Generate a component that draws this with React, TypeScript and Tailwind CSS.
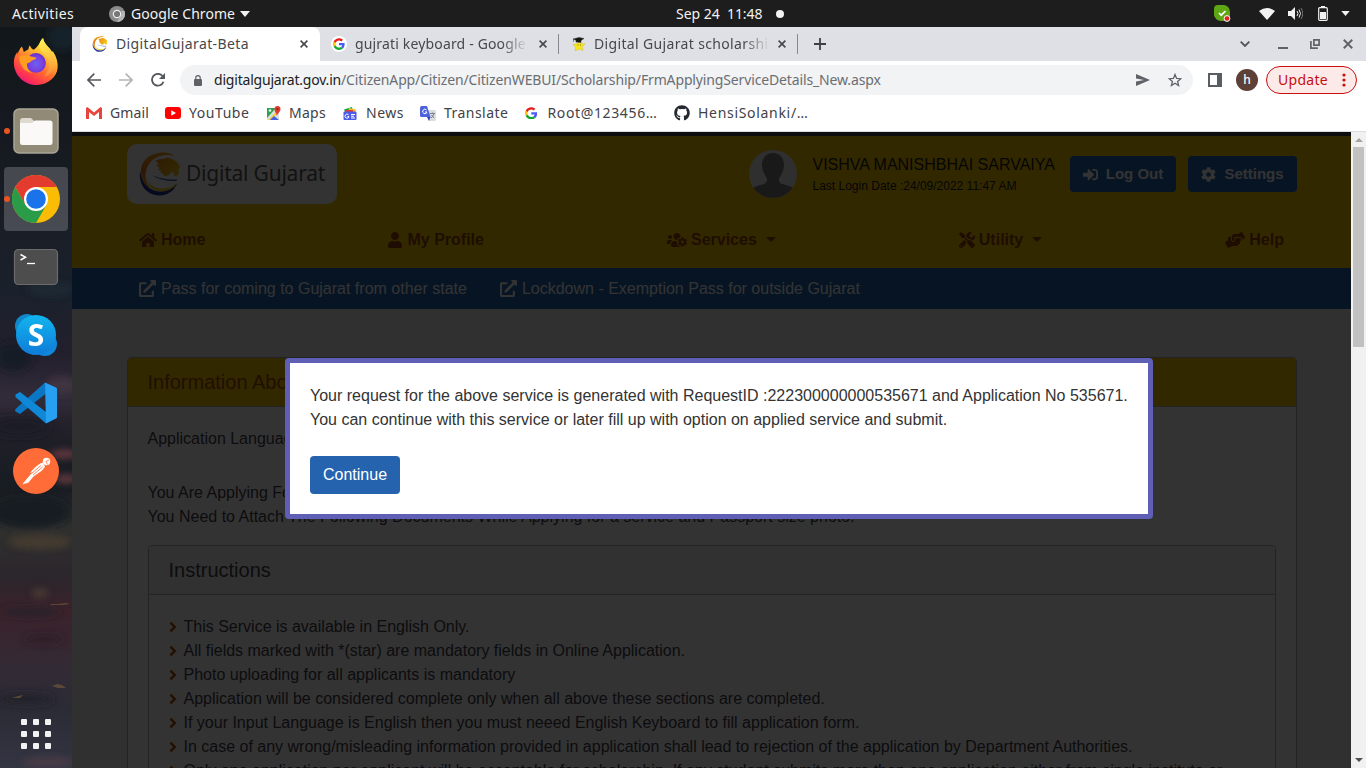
import type { ReactNode } from "react";
import {
  FaAngleRight,
  FaCog,
  FaExternalLinkAlt,
  FaGithub,
  FaHandsHelping,
  FaHome,
  FaSignInAlt,
  FaTools,
  FaUser,
  FaUsersCog,
} from "react-icons/fa";

const GoogleG = ({ className }: { className: string }) => (
  <svg viewBox="0 0 48 48" className={className}>
    <path fill="#FFC107" d="M10.5 28.6a13.600 13.600 0 0 1 0-9.200V13.200H2.600a23.500 23.500 0 0 0 0 21.600z" />
    <path fill="#EA1D1D" d="M24 10c3.600 0 6.700 1.200 9.200 3.600l6.900-6.900C35.900 2.800 30.500.5 24 .5 14.700.5 6.600 5.800 2.600 13.200l7.900 6.200C12.400 13.700 17.700 10 24 10z" />
    <path fill="#4A5CF5" d="M46.500 24.500c0-1.600-.2-3.100-.4-4.500H24v9h12.700c-.6 3-2.300 5.400-4.800 7.100l7.700 6c4.500-4.200 6.900-10.300 6.900-17.600z" />
    <path fill="#12A830" d="M24 47.500c6.500 0 11.900-2.100 15.600-5.400l-7.700-6c-2.100 1.400-4.800 2.300-7.900 2.300-6.300 0-11.600-4.200-13.500-9.800l-7.900 6.200C6.600 42.200 14.700 47.500 24 47.500z" />
  </svg>
);

const GujaratLogo = ({ className }: { className: string }) => (
  <svg viewBox="0 0 42 44" className={className}>
    <defs>
      <linearGradient id="crescent" x1="0.6" y1="0" x2="0.4" y2="1">
        <stop offset="0" stopColor="#f2a516" />
        <stop offset="0.6" stopColor="#e9720f" />
        <stop offset="1" stopColor="#f0b014" />
      </linearGradient>
      <linearGradient id="lion" x1="0" y1="0" x2="1" y2="0.4">
        <stop offset="0" stopColor="#ea8a12" />
        <stop offset="1" stopColor="#f3c413" />
      </linearGradient>
    </defs>
    <path fill="#26359a" d="M1 19C-1 33 8 43 19 43.500 29 44 36 38 38 31c-5 5.500-11 8.500-17 8.500C10 39 3 31 1 19z" />
    <path fill="#f3c916" d="M38 31c-4 4-10 6-16 5.500C15 36 11 33 9 29c1 6 6 10.300 13 10.500 7 .2 14-3.500 16-8.500z" />
    <path fill="url(#crescent)" d="M36 4C28-2 13 0 6 8-1 16 1 31 12 37 5 29 4.500 18 11.500 10 17 3.500 27 1.500 36 4z" />
    <path fill="url(#lion)" d="M16.500 8.500c3-1 5-1.700 8-1.300 3-2.700 8-1 9.500.5 4 1.300 6 4.300 7 7.800l-1.500 2 .3 4-2.800 3.500-2.500-2.500-.5-3.500-2 2c-2 2.500-5 3.500-7 2.500l-2-3-2.500.5 2-2.500-3.500-.5 1.500-2c-1.500-1-2.500-2-3-3.500l2.500-.3z" />
    <path fill="#3c5fb4" d="M13 23c6 3 15 5 25 4.500l-.3 1.500C28 29.500 18 27 13 23z" />
  </svg>
);

const Firefox = () => (
  <svg viewBox="0 0 48 50" className="h-[47px] w-[46px]">
    <defs>
      <linearGradient id="ffBody" x1="0.8" y1="0.05" x2="0.25" y2="1">
        <stop offset="0" stopColor="#fff44f" />
        <stop offset="0.3" stopColor="#ffbd2e" />
        <stop offset="0.6" stopColor="#ff6a30" />
        <stop offset="0.85" stopColor="#ff2f55" />
        <stop offset="1" stopColor="#e31587" />
      </linearGradient>
      <radialGradient id="ffGlobe" cx="0.5" cy="0.55" r="0.6">
        <stop offset="0" stopColor="#6a62f0" />
        <stop offset="0.6" stopColor="#7a3fe0" />
        <stop offset="1" stopColor="#5a2ac0" />
      </radialGradient>
      <linearGradient id="ffTail" x1="0.4" y1="0" x2="0.6" y2="1">
        <stop offset="0" stopColor="#fff44f" />
        <stop offset="1" stopColor="#ff9640" stopOpacity="0.6" />
      </linearGradient>
    </defs>
    <path fill="url(#ffBody)" d="M9 9c1 2 1.500 4 2 6l5-3c0-1 .4-3 1.500-4 .7 2 2 3.400 4 4.500C25 10 27 7 28 5c1-2 2-3.500 3.500-5 .5 4 3 7 6 10 1.500 1.500 2.500 3 3 5l1.500-1c4 6 5.500 12 5 18-1 10-10 17.500-22 18C12 50 1 40 .5 27 .300 22 2 17 4.500 15c-.2 1-.2 2 0 3C5 14.500 6.500 11.500 9 9z" />
    <path fill="url(#ffTail)" d="M31.500 0c.5 4 3 7 6 10 6 6 9 13 6 21-2 5-6 9-11 10 6-6 7-14 3-21-3-4-8-6-8-12 0-3 2-6 4-8z" />
    <circle cx="24" cy="26.500" r="10.500" fill="url(#ffGlobe)" />
    <path fill="#ff9c22" d="M6 20c4-2 9-2 12-.5 2 .8 4 1 6 1.200 1 1-2 2.600-4.500 3.300-1.500 2-3.500 2.500-5 3-.5 5 2 8.500 6 10-8 0-14-7-14.500-17z" />
  </svg>
);

const Chrome = () => (
  <svg viewBox="0 0 48 48" className="size-12">
    <circle cx="24" cy="24" r="24" fill="#fbbc05" />
    <path fill="#e33b2e" d="M3.200 12A24 24 0 0 1 44.800 12H24L13.600 30z" />
    <path fill="#2a9b48" d="M3.200 12A24 24 0 0 0 24 48L34.400 30 24 36 13.600 30z" />
    <circle cx="24" cy="24" r="12" fill="#fff" />
    <circle cx="24" cy="24" r="9.800" fill="#1a73e8" />
  </svg>
);

const Files = () => (
  <svg viewBox="0 0 46 46" className="size-[46px]">
    <rect x="1" y="1" width="44" height="44" rx="5" fill="#918a77" stroke="#aaa596" strokeWidth="1.500" />
    <path d="M7 13a3 3 0 0 1 3-3h8l4 4v6H7z" fill="#dedad0" />
    <path d="M7 15h12l3-2.500h15a2.500 2.500 0 0 1 2.500 2.500v19.500a2.500 2.500 0 0 1-2.500 2.500H9.500A2.500 2.500 0 0 1 7 34.500z" fill="#faf9f7" />
  </svg>
);

const Terminal = () => (
  <svg viewBox="0 0 46 38" className="h-[38px] w-[46px]">
    <rect x="1.500" y="1.500" width="43" height="35" rx="4" fill="#4d4d4d" stroke="#6b6b6b" strokeWidth="1.200" />
    <path d="m7.500 6.500 5 2.700-5 2.800" fill="none" stroke="#fff" strokeWidth="1.500" />
    <path d="M14 15.500h8" stroke="#fff" strokeWidth="1.300" />
  </svg>
);

const Skype = () => (
  <div className="relative flex size-[42px] items-center justify-center">
    <svg viewBox="0 0 42 42" className="absolute inset-0">
      <defs>
        <linearGradient id="sky" x1="0" y1="0" x2="0" y2="1">
          <stop offset="0" stopColor="#12b5ef" />
          <stop offset="1" stopColor="#0f7bd8" />
        </linearGradient>
      </defs>
      <circle cx="12" cy="12" r="12" fill="#1187c9" />
      <circle cx="30" cy="30" r="12" fill="#1187d8" />
      <circle cx="21" cy="21" r="20" fill="url(#sky)" />
    </svg>
    <span className="relative font-['Noto_Sans',sans-serif] text-[30px] leading-none font-bold text-white">S</span>
  </div>
);

const VSCode = () => (
  <svg viewBox="0 0 42 42" className="size-[42px]">
    <path fill="#0b76c4" d="M0 27.500 30 .5l1 11L5 32 .5 29.500z" />
    <path fill="#1088d8" d="M.5 12.500 5 10l26 20v11.500L.5 15z" />
    <path fill="#27a0f2" d="M30 .5 41 5.500c.7.300 1 1 1 1.500v28c0 .8-.4 1.200-1 1.500L31 41.500z" />
  </svg>
);

const Postman = () => (
  <svg viewBox="0 0 46 46" className="size-[46px]">
    <circle cx="23" cy="23" r="23" fill="#ff6c37" />
    <circle cx="33.500" cy="13.500" r="3.700" fill="#fff" />
    <path d="m33 13.500 3-1.500m-3 1.500 1.500 3" stroke="#ff6c37" strokeWidth=".8" />
    <path d="M29.500 14.500 32 18.500c-1.500 3-4 5-6.500 6.500l-5 3.500-5 6c-1 .7-2.200 1-3.500 1l-2.500 1 1-1.800L18 26l2-1.500-3 .3c3-3.500 7.500-8.300 12.500-10.300z" fill="#fff" />
    <path d="m18.500 25.500 9.500-8m-8 9.500 9.500-8" stroke="#ff6c37" strokeWidth=".8" />
  </svg>
);

const Apps = () => (
  <div className="grid grid-cols-3 gap-[6px]">
    {Array.from({ length: 9 }, (_, i) => (
      <span key={i} className="size-[6px] rounded-[1px] bg-[#f2f2f2]" />
    ))}
  </div>
);

const Sky = () => (
  <svg viewBox="0 0 72 741" preserveAspectRatio="none" className="absolute inset-0 h-full w-full">
    <defs>
      <linearGradient id="dusk" x1="0" y1="0" x2="0" y2="1">
        <stop offset="0" stopColor="#12171b" />
        <stop offset="0.2" stopColor="#171b22" />
        <stop offset="0.36" stopColor="#1b212c" />
        <stop offset="0.44" stopColor="#221f2c" />
        <stop offset="0.5" stopColor="#322c3a" />
        <stop offset="0.54" stopColor="#222029" />
        <stop offset="0.62" stopColor="#171c22" />
        <stop offset="0.68" stopColor="#30302f" />
        <stop offset="0.74" stopColor="#2b272c" />
        <stop offset="0.79" stopColor="#3b222b" />
        <stop offset="0.86" stopColor="#332a34" />
        <stop offset="0.92" stopColor="#2b2b35" />
        <stop offset="1" stopColor="#343543" />
      </linearGradient>
      <filter id="soft" x="-30%" y="-30%" width="160%" height="160%">
        <feGaussianBlur stdDeviation="3.500" />
      </filter>
    </defs>
    <rect width="72" height="741" fill="url(#dusk)" />
    <g filter="url(#soft)">
      <ellipse cx="62" cy="10" rx="14" ry="14" fill="#152329" />
      <ellipse cx="50" cy="262" rx="24" ry="8" fill="#1d2c38" opacity=".6" />
      <ellipse cx="14" cy="330" rx="18" ry="14" fill="#181d27" />
      <ellipse cx="62" cy="358" rx="16" ry="9" fill="#4b3b47" opacity=".6" />
      <ellipse cx="20" cy="400" rx="30" ry="10" fill="#1c1f28" />
      <ellipse cx="64" cy="427" rx="14" ry="4" fill="#6a3b43" />
      <ellipse cx="66" cy="452" rx="12" ry="4" fill="#6a3b43" />
      <ellipse cx="30" cy="485" rx="40" ry="16" fill="#171c21" />
      <ellipse cx="40" cy="515" rx="32" ry="7" fill="#4a3d30" opacity=".8" />
      <ellipse cx="40" cy="566" rx="8" ry="4" fill="#4c3e36" />
      <ellipse cx="30" cy="585" rx="30" ry="4" fill="#262229" />
      <ellipse cx="44" cy="612" rx="20" ry="4" fill="#2f1f28" />
      <ellipse cx="26" cy="672" rx="28" ry="5" fill="#23222a" />
      <ellipse cx="48" cy="735" rx="26" ry="4" fill="#4d3c46" />
    </g>
    <path d="M50 577h8l8-1 4 1-8 1H51zM12 671l6-2 5-1-3 3zM52 659l5-2 5 1 4 3h-8z" fill="#6b533a" opacity=".75" />
  </svg>
);

const CloseX = () => (
  <svg viewBox="0 0 8 8" className="size-2 shrink-0">
    <path d="m.6.6 6.800 6.800M7.400.6.600 7.400" stroke="#45484c" strokeWidth="1.600" />
  </svg>
);

function TopBar() {
  return (
    <header className="flex h-[27px] shrink-0 items-center bg-[#1d1d1d] text-[14px] leading-none text-[#f2f2f2]">
      <span className="ml-3 w-[97px] tracking-[0.37px]">Activities</span>
      <svg viewBox="0 0 16 16" className="size-4">
        <circle cx="8" cy="8" r="8" fill="#8b8b8b" />
        <path d="M8 16 12 9a4 4 0 0 0 0-4h3.500A8 8 0 0 1 8 16z" fill="#b5b5b5" />
        <circle cx="8" cy="8" r="3.700" fill="#777" stroke="#eee" strokeWidth="1.200" />
      </svg>
      <span className="ml-1.5 w-[105px] tracking-[0.05px]">Google Chrome</span>
      <svg viewBox="0 0 10 6" className="ml-1 h-[6px] w-[10px]"><path d="M0 0h10L5 6z" fill="#f2f2f2" /></svg>
      <span className="ml-[426px] w-[51px]">Sep 24</span>
      <span className="w-[36px] tracking-[-0.1px]">11:48</span>
      <span className="ml-[13px] size-2 rounded-full bg-[#f2f2f2]" />
      <svg viewBox="0 0 17 17" className="ml-[430px] size-[17px]">
        <path d="M4 0h6a7 7 0 0 1 6 7v5a4 4 0 0 1-4 4H7a7 7 0 0 1-7-6V4a4 4 0 0 1 4-4z" fill="#5ea614" />
        <path d="m5 8 2.200 2.200L11.500 6" fill="none" stroke="#fff" strokeWidth="1.700" />
        <circle cx="13" cy="13.500" r="2.900" fill="#e02424" stroke="#fff" strokeWidth="1" />
      </svg>
      <svg viewBox="0 0 16 12" className="ml-[28px] h-3 w-4"><path d="M0 3Q8-3 16 3L8 12z" fill="#f2f2f2" /></svg>
      <svg viewBox="0 0 15 13" className="ml-[13px] h-[13px] w-[15px]">
        <path d="M0 4h3l4-4v13L3 9H0z" fill="#f2f2f2" />
        <path d="M9 4q2 2.500 0 5M11 2.500q3 4 0 8" fill="none" stroke="#f2f2f2" />
        <path d="M13 1q3.500 5.500 0 11" fill="none" stroke="#8d8d8d" strokeWidth=".8" />
      </svg>
      <svg viewBox="0 0 10 15" className="ml-[15px] h-[15px] w-[10px]">
        <path d="M3 0h4v2H3z" fill="#f2f2f2" />
        <rect x=".7" y="1.700" width="8.600" height="12.600" rx="1" fill="none" stroke="#f2f2f2" strokeWidth="1.200" />
        <path d="M2 6h6v7H2z" fill="#f2f2f2" />
      </svg>
      <svg viewBox="0 0 10 6" className="ml-[13px] h-[5px] w-[9px]"><path d="M0 0h10L5 6z" fill="#f2f2f2" /></svg>
    </header>
  );
}

function DockItem({ children, active, dot }: { children: ReactNode; active?: boolean; dot?: boolean }) {
  return (
    <div className={`relative flex size-16 shrink-0 items-center justify-center rounded ${active ? "bg-white/20" : ""}`}>
      {dot && <span className="absolute top-[29px] left-0 size-1.5 rounded-full bg-[#e95420]" />}
      {children}
    </div>
  );
}

function Dock() {
  return (
    <aside className="relative w-[72px] shrink-0 overflow-hidden">
      <Sky />
      <nav className="relative flex h-full flex-col items-center gap-1 pt-1">
        <DockItem><span className="-mt-1"><Firefox /></span></DockItem>
        <DockItem dot><Files /></DockItem>
        <DockItem active dot><Chrome /></DockItem>
        <DockItem><Terminal /></DockItem>
        <DockItem><Skype /></DockItem>
        <DockItem><VSCode /></DockItem>
        <DockItem><Postman /></DockItem>
        <div className="mt-auto mb-0.5 flex h-16 items-center"><Apps /></div>
      </nav>
    </aside>
  );
}

function TabStrip() {
  return (
    <div className="flex h-[34px] shrink-0 items-center bg-[#dfe0e5] pl-2 text-[14px] leading-none text-[#45484c]">
      <div className="flex h-full w-[240px] items-center rounded-t-lg bg-white pl-3">
        <GujaratLogo className="size-4" />
        <span className="ml-2 w-[184px] tracking-[0.38px]">DigitalGujarat-Beta</span>
        <CloseX />
      </div>
      <div className="flex h-5 w-[239px] items-center border-r border-[#85888d] pl-[11px]">
        <span className="flex size-4 shrink-0 items-center justify-center rounded-full bg-white"><GoogleG className="size-3" /></span>
        <span className="ml-2 w-[173px] overflow-hidden mask-r-from-85% py-1 tracking-[0.16px] whitespace-nowrap">gujrati keyboard - Google Search</span>
        <span className="ml-[11px] flex"><CloseX /></span>
      </div>
      <div className="flex h-5 w-[239px] items-center border-r border-[#85888d] pl-3">
        <svg viewBox="0 0 16 16" className="size-4 shrink-0">
          <path d="m8 5 1.700 2.500 4.300.5-3 2.700 1 3.800-4-1.500-4 2 .7-3.800L2 8.500l4-.7z" fill="#f8e51c" stroke="#c9b90f" strokeWidth=".4" />
          <path d="m2 3 6-1.500 5 1L10 4.500v2L5 6V4.300zM2.500 3v3" fill="#17170f" stroke="#333" strokeWidth=".5" />
          <path d="M7 8.500v1m2.500-1v1" stroke="#504a00" strokeWidth=".7" />
        </svg>
        <span className="ml-[7px] w-[176px] overflow-hidden mask-r-from-85% py-1 tracking-[0.35px] whitespace-nowrap">Digital Gujarat scholarship 2022</span>
        <span className="ml-2 flex"><CloseX /></span>
      </div>
      <svg viewBox="0 0 12 12" className="ml-4 size-3"><path d="M6 0v12M0 6h12" stroke="#3c4043" strokeWidth="1.800" /></svg>
      <svg viewBox="0 0 10 6" className="ml-[414px] h-[6px] w-[10px]"><path d="m.7.7 4.300 4.300L9.300.7" fill="none" stroke="#505256" strokeWidth="1.800" /></svg>
      <span className="mt-2 ml-[28px] h-[2px] w-[10px] bg-[#5f6368]" />
      <svg viewBox="0 0 10 10" className="ml-[22px] size-[10px]">
        <path d="M3.900.9h5.200v5.200H3.900zM.9 2v7.100h7" fill="none" stroke="#5f6368" strokeWidth="1.700" />
      </svg>
      <svg viewBox="0 0 10 10" className="ml-[23px] size-[10px]"><path d="m.8.8 8.400 8.400M9.200.8.800 9.200" stroke="#606368" strokeWidth="2" /></svg>
    </div>
  );
}

function Toolbar() {
  return (
    <div className="flex h-[38px] shrink-0 items-center bg-white pl-[15px] text-[14px] leading-none">
      <svg viewBox="0 0 14 14" className="size-[14px]"><path d="M14 7H1.500M7.300.7 1 7l6.300 6.300" fill="none" stroke="#55585d" strokeWidth="1.700" /></svg>
      <svg viewBox="0 0 14 14" className="ml-[18px] size-[14px]"><path d="M0 7h12.500M6.700.7 13 7l-6.300 6.300" fill="none" stroke="#b3b5b8" strokeWidth="1.700" /></svg>
      <svg viewBox="0 0 14 14" className="ml-[18px] size-[14px]">
        <path d="M12.500 8.700A5.900 5.900 0 1 1 11.500 3l1 1.200" fill="none" stroke="#55585d" strokeWidth="1.800" />
        <path d="M14 0v6H8z" fill="#55585d" />
      </svg>
      <div className="ml-[15px] flex h-[30px] w-[1013px] items-center rounded-full bg-[#f1f3f4] pl-[14px]">
        <svg viewBox="0 0 8 11" className="h-[11px] w-2">
          <path d="M1.800 5V2.800a2.200 2.200 0 0 1 4.400 0V5" fill="none" stroke="#5f6368" strokeWidth="1.200" />
          <rect y="4" width="8" height="7" rx="1" fill="#5f6368" />
        </svg>
        <span className="ml-3 w-[127px] tracking-[-0.2px] whitespace-nowrap text-[#202124]">digitalgujarat.gov.in</span>
        <span className="w-[795px] tracking-[-0.14px] whitespace-nowrap text-[#6b6e73]">
          /CitizenApp/Citizen/CitizenWEBUI/Scholarship/FrmApplyingServiceDetails_New.aspx
        </span>
        <svg viewBox="0 0 14 12" className="h-3 w-[14px]"><path d="M0 0l14 6L0 12V7.500L8 6 0 4.500z" fill="#5f6368" /></svg>
        <svg viewBox="0 0 14 14" className="ml-[18px] size-[14px]">
          <path d="m7 1.500 1.600 3.900 4.200.3-3.200 2.700 1 4.100L7 10.300l-3.600 2.200 1-4.100-3.200-2.700 4.200-.3z" fill="none" stroke="#5f6368" strokeWidth="1.300" />
        </svg>
      </div>
      <svg viewBox="0 0 14 14" className="ml-[15px] size-[14px]">
        <path d="M1 1h12v12H1z" fill="none" stroke="#5a5d63" strokeWidth="2" />
        <path d="M9 1h4v12H9z" fill="#5a5d63" />
      </svg>
      <span className="ml-[14px] flex size-[22px] items-center justify-center rounded-full bg-[#5d4037] text-[12px] font-medium text-white">h</span>
      <div className="ml-2 flex h-7 w-[91px] items-center rounded-full border border-[#c5100d] bg-[#fceae9] pl-[11px] text-[#c5100d]">
        <span className="w-[51px] tracking-[0.29px]">Update</span>
        <svg viewBox="0 0 4 14" className="ml-[13px] h-[14px] w-1">
          <circle cx="2" cy="2" r="1.600" fill="currentColor" />
          <circle cx="2" cy="7" r="1.600" fill="currentColor" />
          <circle cx="2" cy="12" r="1.600" fill="currentColor" />
        </svg>
      </div>
    </div>
  );
}

function Bookmarks() {
  return (
    <div className="flex h-[33px] shrink-0 items-center border-b border-[#dadce0] bg-white pb-1 pl-[14px] text-[14px] leading-none whitespace-nowrap text-[#3f4246]">
      <div className="flex w-[79px] items-center gap-2">
        <svg viewBox="0 0 16 12" className="h-3 w-4">
          <path d="M0 1v11h3V5L8 9l5-4v7h3V1l-1.500-1L8 5.500 1.500 0z" fill="#e7443d" />
        </svg>
        <span className="tracking-[0.13px]">Gmail</span>
      </div>
      <div className="flex w-[101px] items-center gap-2">
        <svg viewBox="0 0 16 12" className="h-3 w-4"><rect width="16" height="12" rx="3" fill="#f00" /><path d="M6.300 3.300v5.400L11 6z" fill="#fff" /></svg>
        <span className="tracking-[0.55px]">YouTube</span>
      </div>
      <div className="flex w-[77px] items-center gap-2">
        <svg viewBox="0 0 15 15" className="size-[15px]">
          <path d="M1 2h12v12H1z" fill="#dcdfe0" /><path d="M1 2h9L1 12z" fill="#2fa04e" />
          <path d="M2 14 13 3v3L5 14z" fill="#f3cf3a" /><path d="m4 14 4-4 5 4z" fill="#4460e5" />
          <circle cx="4" cy="4.500" r="1.300" fill="#e9fff0" />
          <path d="M11 10C10.500 7 8.500 6 8.500 3a3 3 0 0 1 6 0c0 3-3 4-3.500 7z" fill="#e5382f" /><circle cx="11.500" cy="3" r="1" fill="#8c1f18" />
        </svg>
        <span className="tracking-[0.28px]">Maps</span>
      </div>
      <div className="flex w-[77px] items-center gap-[9px]">
        <svg viewBox="0 0 14 13" className="h-[13px] w-[14px]">
          <path d="M1 2.500 9 0l1 5H2z" fill="#18a348" /><path d="M6 1l7 1.500-1 4H5z" fill="#f4c020" />
          <path d="M2 3h8v3H2z" fill="#e33b2e" /><rect x=".5" y="4.500" width="13" height="8.500" rx="1" fill="#4a5be8" />
          <path d="M5.500 7.800A2 2 0 1 0 6 9.500H4.500M8 7.500h4M8 9.200h3M8 11h4" fill="none" stroke="#fff" />
        </svg>
        <span className="tracking-[0.51px]">News</span>
      </div>
      <div className="flex w-[105px] items-center gap-2">
        <svg viewBox="0 0 16 15" className="h-[15px] w-4">
          <path d="M6 4h8.500A1.500 1.500 0 0 1 16 5.500v8A1.500 1.500 0 0 1 14.500 15H9z" fill="#d9dce1" />
          <path d="M1 0h6l3.500 11H1.500A1.500 1.500 0 0 1 0 9.500V1.500z" fill="#4c63dd" /><path d="m7 11h3.500L9 15z" fill="#3344b0" />
          <path d="M6.500 4A2.200 2.200 0 1 0 7 6H5" fill="none" stroke="#fff" />
          <path d="M10 7.500h5M12.500 6.500v1M14 7.500q-1 3.500-3 4.500M11.500 9l2.500 3" fill="none" stroke="#727983" strokeWidth=".9" />
        </svg>
        <span className="tracking-[0.46px]">Translate</span>
      </div>
      <div className="flex w-[149px] items-center gap-[10px]">
        <GoogleG className="size-[12.500px]" />
        <span className="tracking-[0.63px]">Root@123456…</span>
      </div>
      <div className="flex items-center gap-2">
        <FaGithub className="size-4 text-[#24292f]" />
        <span className="tracking-[0.69px]">HensiSolanki/…</span>
      </div>
    </div>
  );
}

const Caret = () => <span className="mb-px ml-[5px] inline-block border-x-[5px] border-t-[5px] border-x-transparent border-t-current" />;

const instructions = [
  "This Service is available in English Only.",
  "All fields marked with *(star) are mandatory fields in Online Application.",
  "Photo uploading for all applicants is mandatory",
  "Application will be considered complete only when all above these sections are completed.",
  "If your Input Language is English then you must neeed English Keyboard to fill application form.",
  "In case of any wrong/misleading information provided in application shall lead to rejection of the application by Department Authorities.",
  "Only one application per applicant will be acceptable for scholarship. If any student submits more than one application either from single institute or",
];

function SiteHeader() {
  return (
    <>
      <div className="h-1 bg-[#404450]" />
      <div className="h-[132px] bg-[#fac600] px-[55px] pt-2">
        <div className="flex h-[60px] items-center">
          <div className="flex h-[60px] w-[210px] shrink-0 items-center rounded-[10px] bg-white pl-3">
            <GujaratLogo className="h-[44px] w-[42px]" />
            <span className="ml-[5px] font-['Noto_Sans',sans-serif] text-[21px] tracking-[-0.22px] whitespace-nowrap text-[#5a5a5a]">Digital Gujarat</span>
          </div>
          <svg viewBox="0 0 48 48" className="ml-[412px] size-12 shrink-0 rounded-full">
            <rect width="48" height="48" fill="#ececec" />
            <path d="M24 3c7 0 11 5 11 12 0 6-3 9-5 14 0 5 3 5 7 6 5 1.500 8 3 11 7v6H0v-6c3-4 6-5.500 11-7 4-1 7-1 7-6-2-5-5-8-5-14C13 8 17 3 24 3z" fill="#7c7c7c" />
          </svg>
          <div className="ml-[15.500px] w-[257.500px] shrink-0 whitespace-nowrap text-[#222]">
            <div className="text-[16px] leading-6">VISHVA MANISHBHAI SARVAIYA</div>
            <div className="text-[12px] leading-[18px]">Last Login Date :24/09/2022 11:47 AM</div>
          </div>
          <div className="flex h-9 w-[106px] shrink-0 items-center justify-center gap-2 rounded bg-[#2264af] text-[15px] font-bold text-white"><FaSignInAlt className="size-[15px]" />Log Out</div>
          <div className="ml-3 flex h-9 w-[109px] shrink-0 items-center justify-center gap-2 rounded bg-[#2264af] text-[15px] font-bold text-white"><FaCog className="size-[15px]" />Settings</div>
        </div>
        <nav className="mt-6 flex items-center justify-between pr-[12px] pl-[12px] text-[16px] leading-6 font-bold text-[#9a440b]">
          <span className="flex items-center gap-1"><FaHome className="h-4 w-[18px]" />Home</span>
          <span className="flex items-center gap-[5px]"><FaUser className="h-4 w-[14px]" />My Profile</span>
          <span className="flex items-center gap-1"><FaUsersCog className="h-4 w-5" />Services <Caret /></span>
          <span className="flex items-center gap-[4px]"><FaTools className="size-4" />Utility <Caret /></span>
          <span className="flex items-center gap-[4px]"><FaHandsHelping className="h-4 w-5" />Help</span>
        </nav>
      </div>
      <div className="flex h-[41px] items-center gap-[33px] bg-[#2264af] pl-[67px] text-[16px] text-white">
        <span className="flex items-center gap-[5px]"><FaExternalLinkAlt className="size-[17px]" />Pass for coming to Gujarat from other state</span>
        <span className="flex items-center gap-[5px]"><FaExternalLinkAlt className="size-[17px]" />Lockdown - Exemption Pass for outside Gujarat</span>
      </div>
    </>
  );
}

function ServicePage() {
  return (
    <div className="h-full overflow-hidden bg-[#f0f0f0]">
      <SiteHeader />
      <section className="mt-12 mr-[54px] ml-[55px] h-[500px] rounded border border-[#b0b0b8] bg-white text-[16px] leading-6 text-[#44404a]">
        <h2 className="h-[49px] rounded-t-[3px] border-b border-[#b0b0b8] bg-[#fac600] px-[19.500px] text-[20px] leading-[49px] text-[#a54a0c]">Information About Service</h2>
        <div className="px-5 pt-5">
          <p className="-ml-[0.500px]">Application Language : English</p>
          <p className="mt-[30px] -ml-[0.500px]">You Are Applying For Scholarship</p>
          <p className="-ml-[0.500px]">You Need to Attach The Following Documents While Applying for a service and Passport size photo.</p>
          <div className="mt-[16px] h-[300px] rounded border border-[#b0b0b8]">
            <h3 className="h-[49px] rounded-t-[3px] border-b border-[#b0b0b8] bg-[#f4f4f4] px-[19.500px] text-[20px] leading-[49px]">Instructions</h3>
            <ul className="px-5 pt-5">
              {instructions.map((line) => (
                <li key={line} className="flex items-center gap-[4.500px] whitespace-nowrap">
                  <FaAngleRight className="-ml-0.5 h-4 w-3 text-[#b85400]" />
                  {line}
                </li>
              ))}
            </ul>
          </div>
        </div>
      </section>
    </div>
  );
}

function Scrollbar() {
  return (
    <div className="flex w-[15px] shrink-0 flex-col items-center bg-[#f1f1f1] py-1.5">
      <svg viewBox="0 0 8 4" className="h-1 w-2"><path d="M4 0l4 4H0z" fill="#a3a3a3" /></svg>
      <span className="mt-[5px] h-[200px] w-[11px] bg-[#c1c1c1]" />
      <svg viewBox="0 0 8 4" className="mt-auto h-1 w-2"><path d="M0 0h8L4 4z" fill="#505050" /></svg>
    </div>
  );
}

export default function App() {
  return (
    <div className="flex h-[768px] w-[1366px] flex-col overflow-hidden font-['Noto_Sans',sans-serif]">
      <TopBar />
      <div className="flex min-h-0 flex-1">
        <Dock />
        <main className="flex min-w-0 flex-1 flex-col">
          <TabStrip />
          <Toolbar />
          <Bookmarks />
          <div className="flex min-h-0 flex-1 font-['Liberation_Sans',sans-serif]">
            <div className="relative min-w-0 flex-1">
              <ServicePage />
              <div className="absolute inset-0 bg-black/80">
                <div className="absolute top-[226px] left-[213px] h-[161px] w-[868px] rounded border-5 border-[#5f60b5] bg-white px-5 pt-[21px] text-[16px] leading-6 whitespace-nowrap text-[#333]">
                  <p>Your request for the above service is generated with RequestID :222300000000535671 and Application No 535671.</p>
                  <p>You can continue with this service or later fill up with option on applied service and submit.</p>
                  <button className="mt-6 h-[38px] rounded bg-[#2563ae] px-[13px] text-white">Continue</button>
                </div>
              </div>
            </div>
            <Scrollbar />
          </div>
        </main>
      </div>
    </div>
  );
}
